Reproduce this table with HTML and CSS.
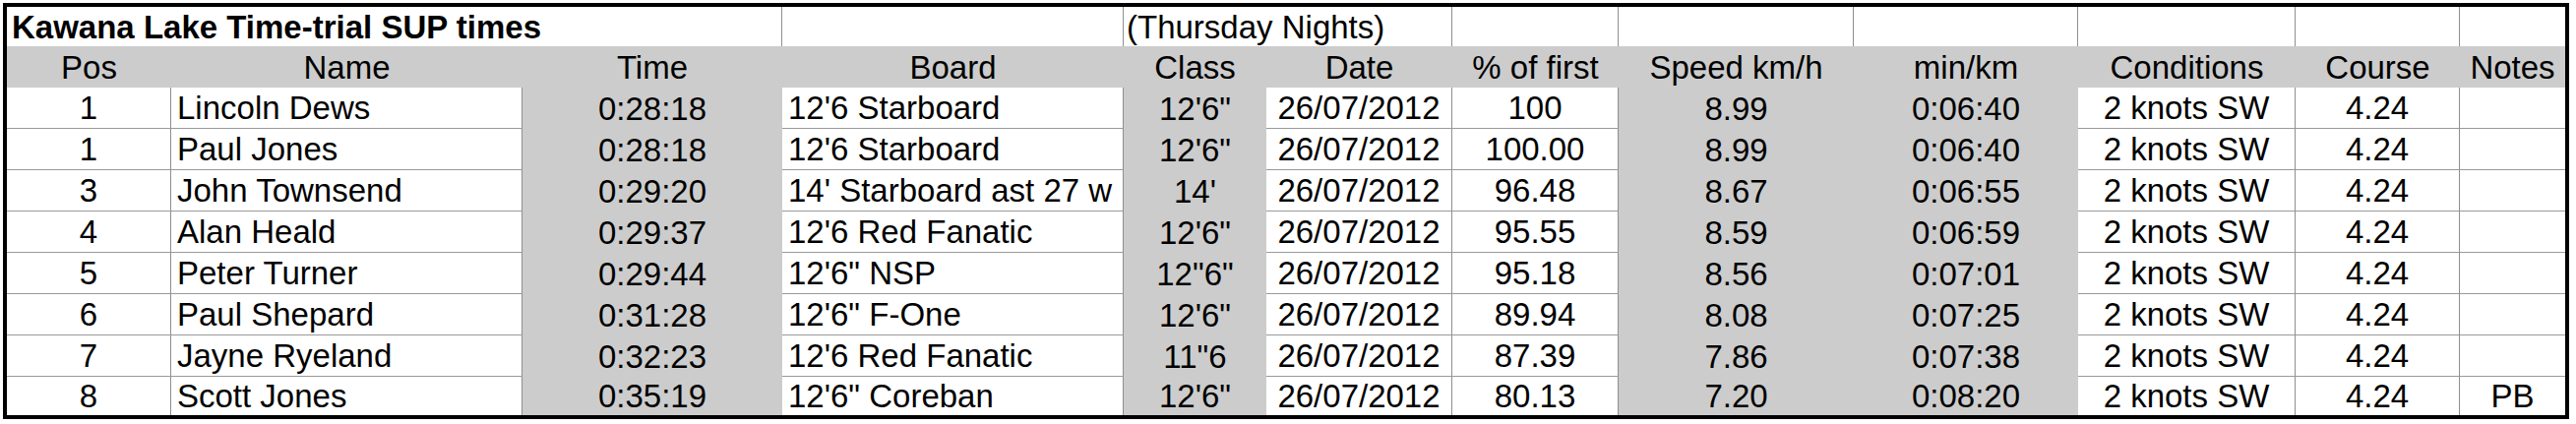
FILE: index.html
```html
<!DOCTYPE html>
<html>
<head>
<meta charset="utf-8">
<link rel="stylesheet" href="styles.css">
</head>
<body>
<div class="sheet">
  <div class="c w l title span3"><b>Kawana Lake Time-trial SUP times</b></div>
  <div class="c w"></div>
  <div class="c w l sub span2">(Thursday Nights)</div>
  <div class="c w"></div>
  <div class="c w"></div>
  <div class="c w"></div>
  <div class="c w"></div>
  <div class="c w"></div>
  <div class="c w nr"></div>

  <div class="c g">Pos</div>
  <div class="c g">Name</div>
  <div class="c g">Time</div>
  <div class="c g">Board</div>
  <div class="c g">Class</div>
  <div class="c g">Date</div>
  <div class="c g">% of first</div>
  <div class="c g">Speed km/h</div>
  <div class="c g">min/km</div>
  <div class="c g">Conditions</div>
  <div class="c g">Course</div>
  <div class="c g">Notes</div>

  <div class="c w">1</div><div class="c w l">Lincoln Dews</div><div class="c g">0:28:18</div><div class="c w l">12'6 Starboard</div><div class="c g">12'6"</div><div class="c w">26/07/2012</div><div class="c w">100</div><div class="c g">8.99</div><div class="c g">0:06:40</div><div class="c w">2 knots SW</div><div class="c w">4.24</div><div class="c w nr"></div>

  <div class="c w">1</div><div class="c w l">Paul Jones</div><div class="c g">0:28:18</div><div class="c w l">12'6 Starboard</div><div class="c g">12'6"</div><div class="c w">26/07/2012</div><div class="c w">100.00</div><div class="c g">8.99</div><div class="c g">0:06:40</div><div class="c w">2 knots SW</div><div class="c w">4.24</div><div class="c w nr"></div>

  <div class="c w">3</div><div class="c w l">John Townsend</div><div class="c g">0:29:20</div><div class="c w l">14' Starboard ast 27 w</div><div class="c g">14'</div><div class="c w">26/07/2012</div><div class="c w">96.48</div><div class="c g">8.67</div><div class="c g">0:06:55</div><div class="c w">2 knots SW</div><div class="c w">4.24</div><div class="c w nr"></div>

  <div class="c w">4</div><div class="c w l">Alan Heald</div><div class="c g">0:29:37</div><div class="c w l">12'6 Red Fanatic</div><div class="c g">12'6"</div><div class="c w">26/07/2012</div><div class="c w">95.55</div><div class="c g">8.59</div><div class="c g">0:06:59</div><div class="c w">2 knots SW</div><div class="c w">4.24</div><div class="c w nr"></div>

  <div class="c w">5</div><div class="c w l">Peter Turner</div><div class="c g">0:29:44</div><div class="c w l">12'6" NSP</div><div class="c g">12"6"</div><div class="c w">26/07/2012</div><div class="c w">95.18</div><div class="c g">8.56</div><div class="c g">0:07:01</div><div class="c w">2 knots SW</div><div class="c w">4.24</div><div class="c w nr"></div>

  <div class="c w">6</div><div class="c w l">Paul Shepard</div><div class="c g">0:31:28</div><div class="c w l">12'6" F-One</div><div class="c g">12'6"</div><div class="c w">26/07/2012</div><div class="c w">89.94</div><div class="c g">8.08</div><div class="c g">0:07:25</div><div class="c w">2 knots SW</div><div class="c w">4.24</div><div class="c w nr"></div>

  <div class="c w">7</div><div class="c w l">Jayne Ryeland</div><div class="c g">0:32:23</div><div class="c w l">12'6 Red Fanatic</div><div class="c g">11"6</div><div class="c w">26/07/2012</div><div class="c w">87.39</div><div class="c g">7.86</div><div class="c g">0:07:38</div><div class="c w">2 knots SW</div><div class="c w">4.24</div><div class="c w nr"></div>

  <div class="c w nb">8</div><div class="c w l nb">Scott Jones</div><div class="c g">0:35:19</div><div class="c w l nb">12'6" Coreban</div><div class="c g">12'6"</div><div class="c w nb">26/07/2012</div><div class="c w nb">80.13</div><div class="c g">7.20</div><div class="c g">0:08:20</div><div class="c w nb">2 knots SW</div><div class="c w nb">4.24</div><div class="c w nr nb">PB</div>
</div>
</body>
</html>
```

FILE: styles.css
```css
html, body {
  margin: 0;
  padding: 0;
  background: #ffffff;
}

body {
  padding: 3px;
  font-family: "Liberation Sans", Arial, sans-serif;
  font-size: 33px;
  line-height: 1;
  color: #000;
}

.sheet {
  display: grid;
  grid-template-columns: 167px 357px 264px 347px 145px 189px 169px 239px 228px 221px 167px 107px;
  grid-template-rows: 40px 42px repeat(7, 42px) 39px;
  width: max-content;
  border: 4px solid #000;
}

.c {
  box-sizing: border-box;
  display: flex;
  align-items: center;
  justify-content: center;
  white-space: nowrap;
  overflow: hidden;
  min-width: 0;
}

.w {
  background: #ffffff;
  border-right: 1px solid #8f8f8f;
  border-bottom: 1px solid #9a9a9a;
}

.g {
  background: #cccccc;
}

.l {
  justify-content: flex-start;
  padding-left: 6px;
}

.title {
  padding-left: 5px;
  border-bottom: none;
}

.sub {
  padding-left: 3px;
}

.sheet > .w:nth-child(-n+9) {
  border-bottom: none;
}

.span3 {
  grid-column: span 3;
}

.span2 {
  grid-column: span 2;
}

.nr {
  border-right: none;
}

.nb {
  border-bottom: none;
}
```
